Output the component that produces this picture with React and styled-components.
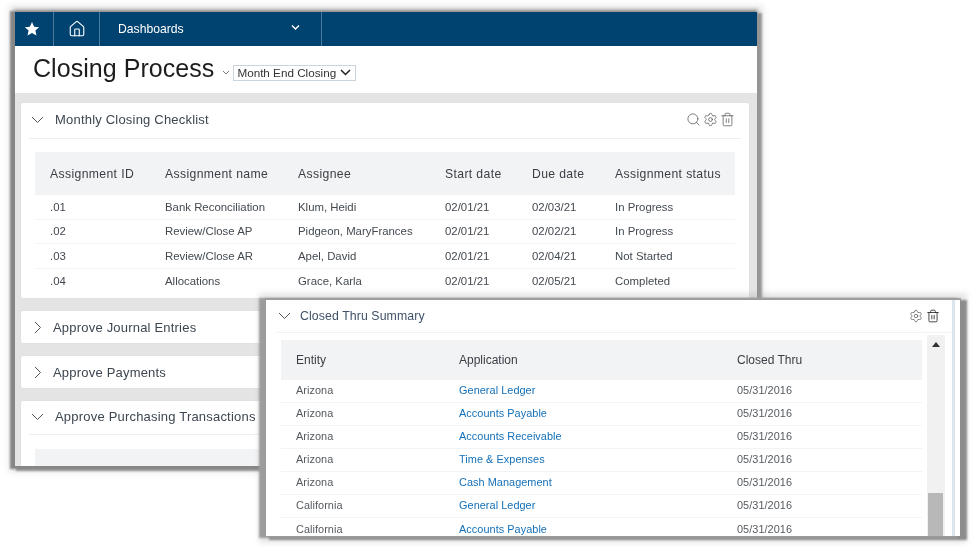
import React from 'react';
import styled, { createGlobalStyle } from 'styled-components';
import { Search, Settings, Trash2, House } from 'lucide-react';

const Global = createGlobalStyle`
  html, body { margin: 0; padding: 0; background: #fff; }
  body { font-family: "Liberation Sans", Arial, sans-serif; }
`;

const Stage = styled.div`
  position: relative;
  width: 977px;
  height: 547px;
  overflow: hidden;
  background: #fff;
  filter: blur(0.5px);
`;

const MainWindow = styled.section`
  position: absolute;
  left: 15px;
  top: 12px;
  width: 742px;
  height: 454px;
  display: flex;
  flex-direction: column;
  overflow: hidden;
  background: #e4e4e4;
  box-shadow: -3px 1px 2px 2px #868686, 3px 3px 2px 2px #969696, 0 -2px 3px 1px #b4b4b4, 0 0 6px 6px rgba(170,170,170,.3);
`;

const NavBar = styled.nav`
  display: flex;
  flex: none;
  height: 34px;
  background: #004270;
  color: #fff;
`;

const NavCell = styled.div`
  width: ${p => p.$w}px;
  flex: none;
  display: flex;
  align-items: center;
  justify-content: ${p => (p.$menu ? 'space-between' : 'center')};
  padding: ${p => (p.$menu ? '0 21px 4px 18px' : '0 0 1px')};
  box-sizing: border-box;
  border-right: 1px solid #4d7a9b;
  font-size: 12.2px;
`;

const NavLabel = styled.span`
  margin-top: 4px;
`;

const StarWrap = styled.span`
  display: flex;
  margin-right: 5px;
`;

const TitleBar = styled.header`
  flex: none;
  height: 47px;
  background: #fff;
  display: flex;
  align-items: center;
  padding: 0 0 0 18px;
  box-sizing: border-box;
`;

const PageTitle = styled.h1`
  margin: 0 0 2px;
  font-size: 25px;
  font-weight: 400;
  color: #1d1d1d;
  letter-spacing: 0.05px;
`;

const TinyCaret = styled.svg`
  margin: 6px 3px 0 8px;
  flex: none;
`;

const SelectBox = styled.div`
  width: 123px;
  height: 16px;
  margin-top: 6px;
  box-sizing: border-box;
  border: 1px solid #c9d4dc;
  display: flex;
  align-items: center;
  justify-content: space-between;
  padding: 0 4px 0 3px;
  font-size: 11.7px;
  color: #333;
  background: #fff;
`;

const Body = styled.div`
  flex: 1;
  display: flex;
  flex-direction: column;
  gap: 11px;
  padding: 9px 7px 0 5px;
`;

const Card = styled.article`
  flex: none;
  background: #fff;
  border-radius: 3px;
  border: 1px solid #dde2e6;
  box-sizing: border-box;
  height: ${p => (p.$h ? `${p.$h}px` : 'auto')};
`;

const CardHead = styled.div`
  height: ${p => p.$h || 32}px;
  display: flex;
  align-items: center;
  box-sizing: border-box;
  margin: 0 ${p => (p.$open ? '8px' : '0')};
  padding-left: ${p => (p.$open ? '2px' : '10px')};
  padding-bottom: ${p => (p.$open ? '2px' : '0')};
  border-bottom: ${p => (p.$open ? '1px solid #eceff1' : 'none')};
  color: #3d4650;
  font-size: 13px;
  letter-spacing: 0.2px;
`;

const HeadIcon = styled.svg`
  flex: none;
  margin-right: ${p => p.$gap}px;
`;

const HeadTitle = styled.span`
  flex: 1;
`;

const Tools = styled.div`
  display: flex;
  align-items: center;
  gap: ${p => p.$gap}px;
  color: #555;
  margin-right: ${p => p.$mr}px;
`;

const TablePad = styled.div`
  padding: ${p => p.$top}px 14px 0;
`;

const Grid = styled.div`
  display: grid;
  grid-template-columns: ${p => p.$cols};
  align-items: center;
  padding-left: 15px;
  box-sizing: border-box;
`;

const HeadRow = styled(Grid)`
  height: ${p => p.$h}px;
  background: #f1f3f5;
  color: #3a3f45;
  font-size: 12.2px;
  letter-spacing: 0.37px;
`;

const OverlayHeadRow = styled(HeadRow)`
  font-size: 12px;
  letter-spacing: 0;
`;

const Row = styled(Grid)`
  height: ${p => p.$h}px;
  color: #444a50;
  font-size: 11.4px;
  letter-spacing: 0;
  border-bottom: 1px solid #f1f3f4;
  &:last-child { border-bottom: none; }
`;

const OverlayRow = styled(Row)`
  color: #555a5f;
  font-size: 10.9px;
  letter-spacing: 0.05px;
  padding-bottom: 2px;
`;

const Link = styled.span`
  color: #1470b8;
`;

const OverlayWindow = styled.section`
  position: absolute;
  left: 266px;
  top: 300px;
  width: 694px;
  height: 236px;
  background: #fff;
  overflow: hidden;
  display: flex;
  flex-direction: column;
  box-sizing: border-box;
  border-right: 5px solid #fff;
  &::after {
    content: "";
    position: absolute;
    top: 0;
    bottom: 0;
    right: 0;
    width: 3px;
    background: #dbe5ec;
  }
`;

const OverlayShadow = styled.div`
  position: absolute;
  left: 266px;
  top: 300px;
  width: 694px;
  height: 236px;
  box-shadow: -5px 0 2px 2px #9c9c9c, 5px 2px 2px 2px #8c8c8c, 0 -1px 1px 1px #a8a8a8, 0 0 5px 7px rgba(160,160,160,.25);
`;

const OverlayHead = styled.div`
  height: 33px;
  display: flex;
  align-items: center;
  margin: 0 0 0 11px;
  padding: 0 0 1px 1px;
  flex: none;
  box-sizing: border-box;
  border-bottom: 1px solid #f0f2f3;
  color: #3f5268;
  font-size: 12.3px;
  letter-spacing: 0.1px;
  width: 680px;
`;

const OverlayBody = styled.div`
  display: flex;
  flex: 1;
  min-height: 0;
  padding-left: 15px;
  gap: 5px;
`;

const TableCol = styled.div`
  width: 641px;
  padding-top: 7px;
  flex: none;
`;

const ScrollBar = styled.div`
  width: 18px;
  height: 203px;
  margin-top: 2px;
  background: #f1f1f1;
  position: relative;
  flex: none;
  &::before {
    content: "";
    position: absolute;
    left: 5px;
    top: 7px;
    border-left: 4px solid transparent;
    border-right: 4px solid transparent;
    border-bottom: 5px solid #333;
  }
`;

const Thumb = styled.div`
  position: absolute;
  left: 1px;
  right: 2px;
  bottom: 0;
  height: 45px;
  background: #b8b8b8;
`;

const Chevron = ({ dir, gap, color = '#555', size = 13 }) => (
  <HeadIcon $gap={gap} width={size} height={size} viewBox="0 0 13 13" fill="none" stroke={color} strokeWidth="1">
    {dir === 'down' ? <path d="M1 4l5.5 5.5L12 4" /> : <path d="M4 1l5.5 5.5L4 12" />}
  </HeadIcon>
);

const Star = () => (
  <svg width="16" height="16" viewBox="0 0 24 24" fill="#fff">
    <path d="M12 1.5l3.2 7 7.6.8-5.7 5.1 1.6 7.5L12 18l-6.7 3.9 1.6-7.5L1.2 9.3l7.6-.8z" />
  </svg>
);

const mainCols = '115px 133px 147px 87px 83px 1fr';
const mainRows = [
  ['.01', 'Bank Reconciliation', 'Klum, Heidi', '02/01/21', '02/03/21', 'In Progress'],
  ['.02', 'Review/Close AP', 'Pidgeon, MaryFrances', '02/01/21', '02/02/21', 'In Progress'],
  ['.03', 'Review/Close AR', 'Apel, David', '02/01/21', '02/04/21', 'Not Started'],
  ['.04', 'Allocations', 'Grace, Karla', '02/01/21', '02/05/21', 'Completed'],
];

const overlayCols = '163px 278px 1fr';
const overlayRows = [
  ['Arizona', 'General Ledger'],
  ['Arizona', 'Accounts Payable'],
  ['Arizona', 'Accounts Receivable'],
  ['Arizona', 'Time & Expenses'],
  ['Arizona', 'Cash Management'],
  ['California', 'General Ledger'],
  ['California', 'Accounts Payable'],
];

export default function App() {
  return (
    <>
      <Global />
      <Stage>
        <MainWindow>
          <NavBar>
            <NavCell $w={39}><StarWrap><Star /></StarWrap></NavCell>
            <NavCell $w={46}><House size={18} strokeWidth={1.5} /></NavCell>
            <NavCell $w={222} $menu>
              <NavLabel>Dashboards</NavLabel>
              <svg width="9" height="7" viewBox="0 0 9 7" fill="none" stroke="#fff" strokeWidth="1.4"><path d="M1 1.5l3.5 3.5L8 1.5" /></svg>
            </NavCell>
          </NavBar>
          <TitleBar>
            <PageTitle>Closing Process</PageTitle>
            <TinyCaret width="8" height="6" viewBox="0 0 8 6" fill="none" stroke="#777"><path d="M1 1l3 3 3-3" /></TinyCaret>
            <SelectBox>
              <span>Month End Closing</span>
              <svg width="11" height="7" viewBox="0 0 11 7" fill="none" stroke="#222" strokeWidth="1.5"><path d="M1 1l4.5 4.5L10 1" /></svg>
            </SelectBox>
          </TitleBar>
          <Body>
            <Card $h={197}>
              <CardHead $open $h={36}>
                <Chevron dir="down" gap={11} />
                <HeadTitle>Monthly Closing Checklist</HeadTitle>
                <Tools $mr={6} $gap={2}>
                  <Search size={15} strokeWidth={1.2} />
                  <Settings size={15} strokeWidth={1.2} />
                  <Trash2 size={15} strokeWidth={1.2} />
                </Tools>
              </CardHead>
              <TablePad $top={13}>
                <HeadRow $cols={mainCols} $h={43}>
                  <span>Assignment ID</span>
                  <span>Assignment name</span>
                  <span>Assignee</span>
                  <span>Start date</span>
                  <span>Due date</span>
                  <span>Assignment status</span>
                </HeadRow>
                {mainRows.map(r => (
                  <Row key={r[0]} $cols={mainCols} $h={24.5}>
                    {r.map((c, i) => <span key={i}>{c}</span>)}
                  </Row>
                ))}
              </TablePad>
            </Card>
            <Card>
              <CardHead><Chevron dir="right" gap={9} />Approve Journal Entries</CardHead>
            </Card>
            <Card>
              <CardHead><Chevron dir="right" gap={9} />Approve Payments</CardHead>
            </Card>
            <Card>
              <CardHead $open $h={34}>
                <Chevron dir="down" gap={11} />
                <HeadTitle>Approve Purchasing Transactions</HeadTitle>
              </CardHead>
              <TablePad $top={14}>
                <HeadRow $cols="161px 1fr" $h={43}>
                  <span>Transaction</span>
                  <span>Type</span>
                </HeadRow>
              </TablePad>
            </Card>
          </Body>
        </MainWindow>
        <OverlayShadow />
        <OverlayWindow>
          <OverlayHead>
            <Chevron dir="down" gap={9} />
            <HeadTitle>Closed Thru Summary</HeadTitle>
            <Tools $mr={17} $gap={3}>
              <Settings size={14} strokeWidth={1.2} />
              <Trash2 size={14} strokeWidth={1.4} color="#222" />
            </Tools>
          </OverlayHead>
          <OverlayBody>
            <TableCol>
              <OverlayHeadRow $cols={overlayCols} $h={40}>
                <span>Entity</span>
                <span>Application</span>
                <span>Closed Thru</span>
              </OverlayHeadRow>
              {overlayRows.map((r, i) => (
                <OverlayRow key={i} $cols={overlayCols} $h={23}>
                  <span>{r[0]}</span>
                  <Link>{r[1]}</Link>
                  <span>05/31/2016</span>
                </OverlayRow>
              ))}
            </TableCol>
            <ScrollBar><Thumb /></ScrollBar>
          </OverlayBody>
        </OverlayWindow>
      </Stage>
    </>
  );
}
